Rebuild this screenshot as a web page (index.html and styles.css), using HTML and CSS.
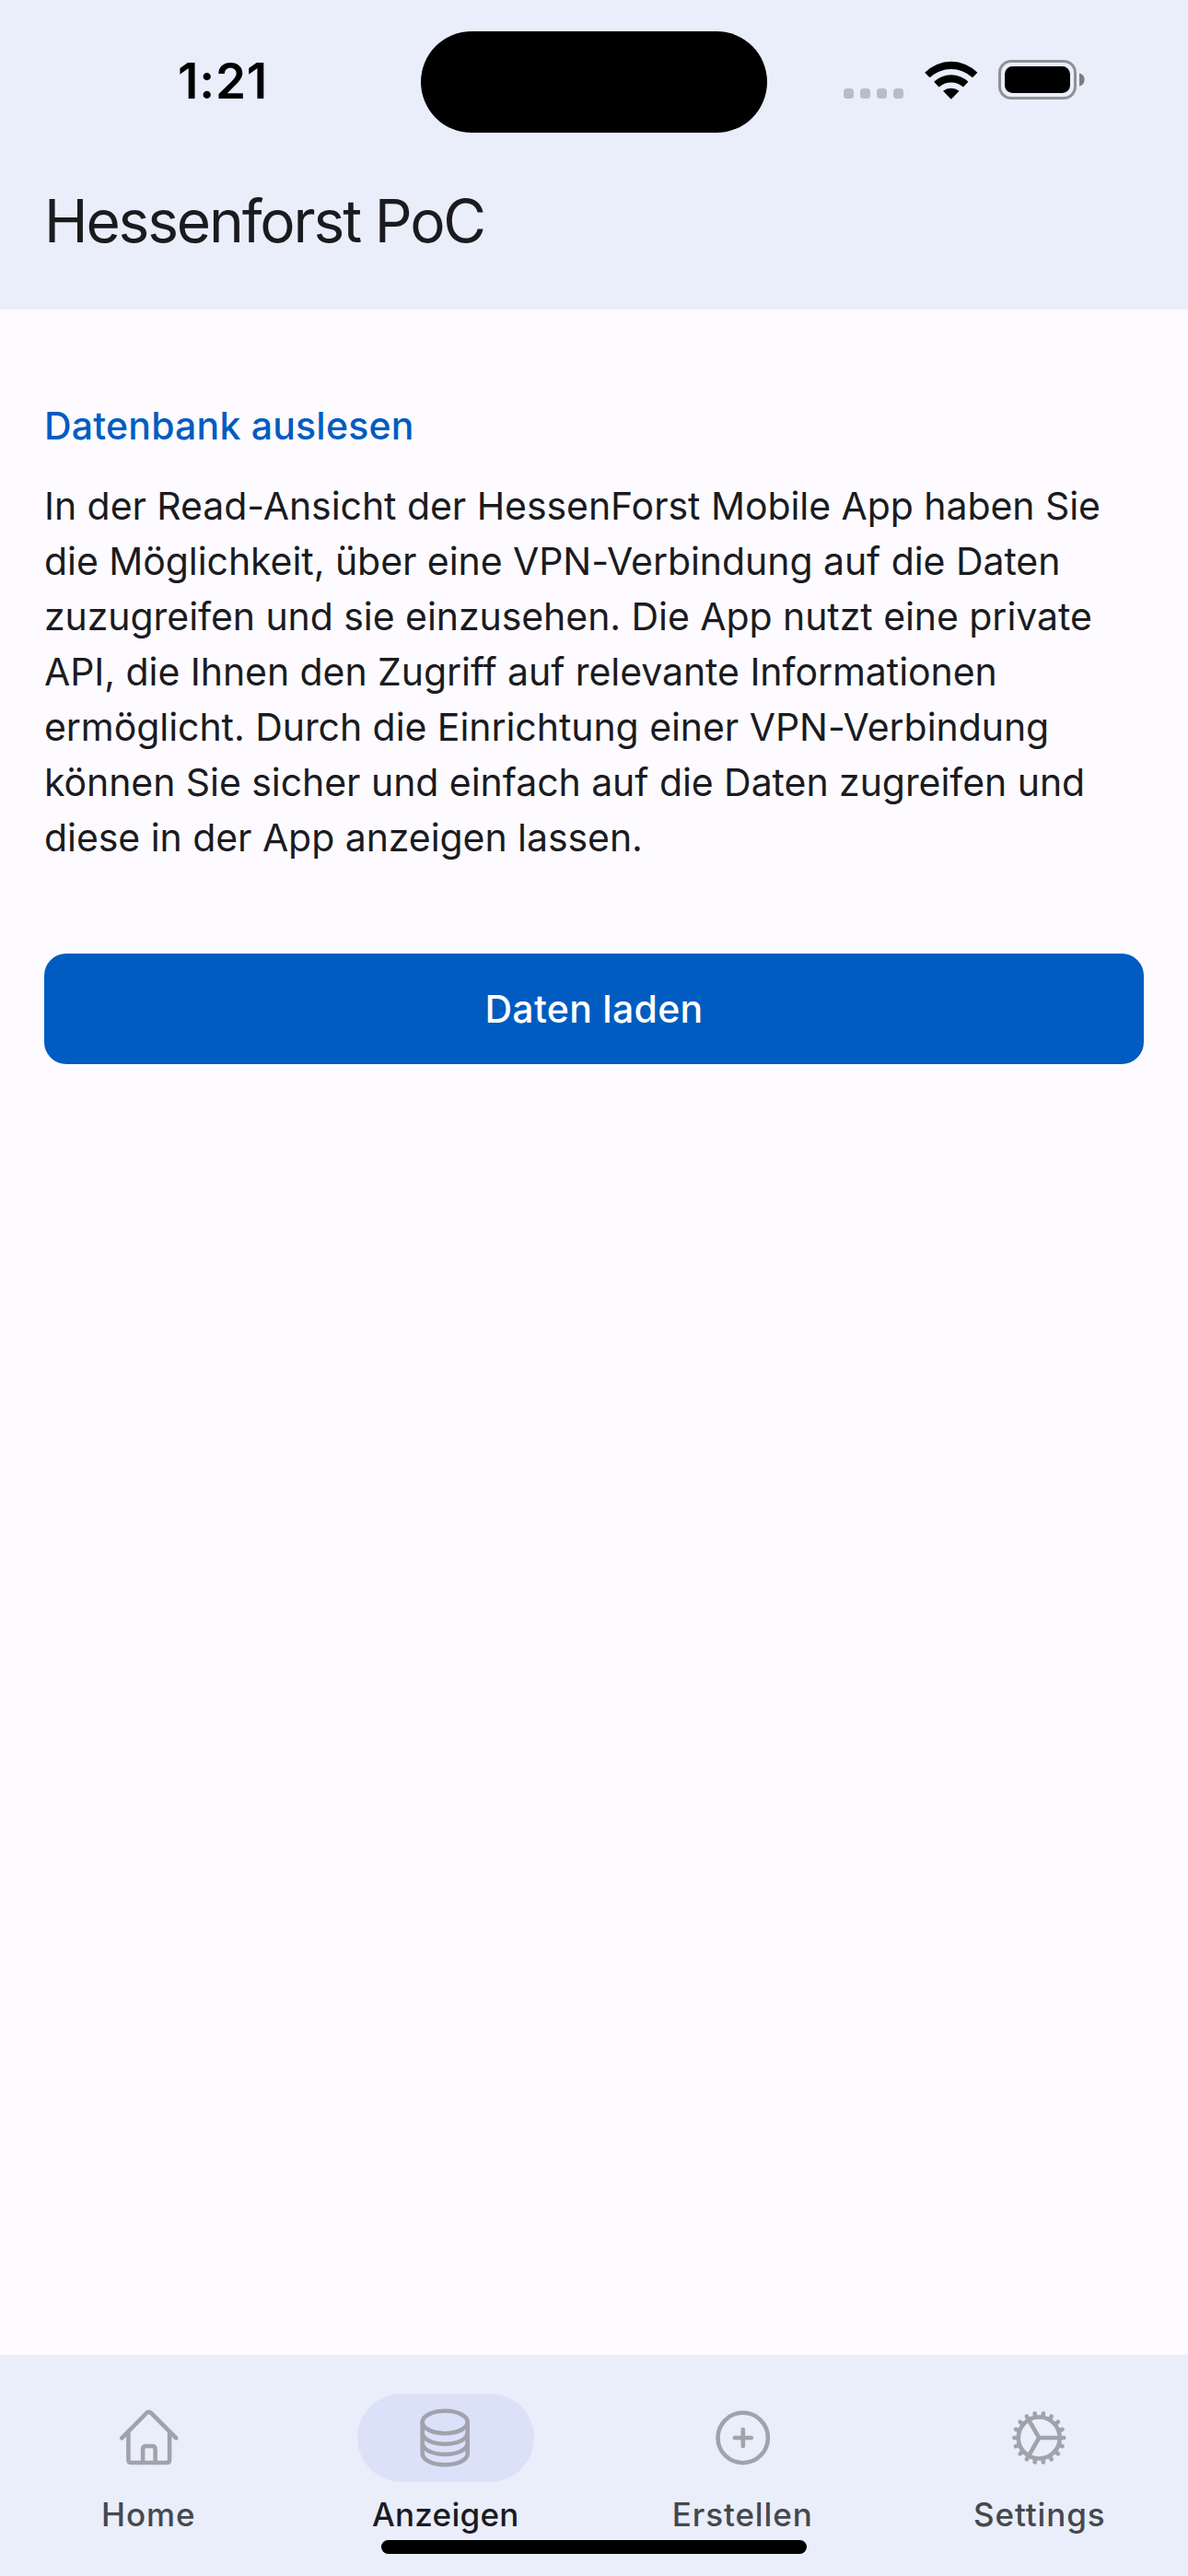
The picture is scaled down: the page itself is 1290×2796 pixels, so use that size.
FILE: index.html
```html
<!DOCTYPE html>
<html lang="de">

<head>
  <meta charset="UTF-8">
  <title>Hessenforst PoC</title>
  <link rel="stylesheet" href="styles.css">
</head>

<body>
  <div class="app">
    <header>
      <div class="statusbar">
        <div class="time">1:21</div>
        <div class="island"></div>
        <div class="status-icons">
          <div class="signal"><i></i><i></i><i></i><i></i></div>
          <svg class="wifi" width="58" height="42" viewBox="0 0 58 42">
            <path d="M0.2 12.8A40 40 0 0 1 57.4 12.8L52 18.2A34 34 0 0 0 5.6 18.2Z"/>
            <path d="M10.2 22.8A27 27 0 0 1 47.4 22.8L42 28.6A19.5 19.5 0 0 0 15.6 28.6Z"/>
            <path d="M20 32.8A14 14 0 0 1 37.6 32.8L28.8 41.8Z"/>
          </svg>
          <svg class="battery" width="94" height="43" viewBox="0 0 94 43">
            <rect x="1.5" y="1.5" width="82" height="40" rx="12.5" fill="none" stroke="#8f9197" stroke-width="3"/>
            <rect x="7" y="7" width="71" height="29" rx="8.5"/>
            <path d="M88 14.5C95.5 16 95.5 27 88 28.5Z" fill="#7b7d83"/>
          </svg>
        </div>
      </div>
      <h1>Hessenforst PoC</h1>
    </header>

    <main>
      <h2>Datenbank auslesen</h2>
      <p>
        In der Read-Ansicht der HessenForst Mobile App haben Sie<br>
        die Möglichkeit, über eine VPN-Verbindung auf die Daten<br>
        zuzugreifen und sie einzusehen. Die App nutzt eine private<br>
        API, die Ihnen den Zugriff auf relevante Informationen<br>
        ermöglicht. Durch die Einrichtung einer VPN-Verbindung<br>
        können Sie sicher und einfach auf die Daten zugreifen und<br>
        diese in der App anzeigen lassen.
      </p>
      <button class="load" type="button">Daten laden</button>
    </main>

    <nav>
      <a class="tab">
        <div class="pill">
          <svg class="icon" viewBox="0 0 72 72">
            <path d="M7.2 36.3L34.2 9Q36.6 6.7 39 9L66.3 36.3"/>
            <path d="M14.4 29.5V60Q14.4 63 17.4 63H56Q59.1 63 59.1 60V29.5"/>
            <path d="M30.1 63V48.5Q30.1 45 33.6 45H40.1Q43.6 45 43.6 48.5V63"/>
          </svg>
        </div>
        <span>Home</span>
      </a>
      <a class="tab active">
        <div class="pill">
          <svg class="icon" viewBox="0 0 72 72">
            <ellipse cx="35.2" cy="19" rx="24.5" ry="12.2"/>
            <path d="M10.7 19V53C10.7 60 21.5 65.2 35.2 65.2S59.7 60 59.7 53V19"/>
            <path d="M10.7 30.5C10.7 37.5 21.5 42.7 35.2 42.7S59.7 37.5 59.7 30.5"/>
            <path d="M10.7 41.8C10.7 48.8 21.5 54 35.2 54S59.7 48.8 59.7 41.8"/>
          </svg>
        </div>
        <span>Anzeigen</span>
      </a>
      <a class="tab">
        <div class="pill">
          <svg class="icon" viewBox="0 0 72 72">
            <circle cx="36.7" cy="36" r="27.2"/>
            <path d="M27.8 36H45.8M36.8 27V45"/>
          </svg>
        </div>
        <span>Erstellen</span>
      </a>
      <a class="tab">
        <div class="pill">
          <svg class="icon" viewBox="0 0 72 72">
            <defs>
              <path id="teeth" d="M8.4 36H12M58.6 36H62.2"/>
            </defs>
            <circle cx="35.3" cy="36" r="22.5"/>
            <use href="#teeth"/>
            <use href="#teeth" transform="rotate(20 35.3 36)"/>
            <use href="#teeth" transform="rotate(40 35.3 36)"/>
            <use href="#teeth" transform="rotate(60 35.3 36)"/>
            <use href="#teeth" transform="rotate(80 35.3 36)"/>
            <use href="#teeth" transform="rotate(100 35.3 36)"/>
            <use href="#teeth" transform="rotate(120 35.3 36)"/>
            <use href="#teeth" transform="rotate(140 35.3 36)"/>
            <use href="#teeth" transform="rotate(160 35.3 36)"/>
            <path d="M57.5 36H35.3L24.2 16.8M35.3 36L24.2 55.2"/>
          </svg>
        </div>
        <span>Settings</span>
      </a>
      <div class="home-indicator"></div>
    </nav>
  </div>
</body>

</html>
```
FILE: styles.css
```css
* {
  box-sizing: border-box;
}

body {
  margin: 0;
  background-color: #fdfbff;
  color: #1b1b1f;
  font-family: Inter, "Liberation Sans", sans-serif;
}

.app {
  width: 1290px;
  height: 2796px;
  display: flex;
  flex-direction: column;
}

header {
  height: 336px;
  background-color: #e9eefa;
}

.statusbar {
  height: 178px;
  display: grid;
  grid-template-columns: 457px 376px 457px;
  align-items: center;
}

.time {
  padding-left: 27px;
  padding-bottom: 2px;
  color: #000;
  font-size: 53px;
  font-weight: 600;
  letter-spacing: 0.8px;
  text-align: center;
}

.island {
  height: 110px;
  border-radius: 55px;
  background-color: #000;
}

.status-icons {
  padding-left: 83px;
  display: flex;
  align-items: center;
}

.signal {
  display: flex;
  gap: 7px;
  margin-right: 23px;
  padding-top: 25px;
}

.signal i {
  width: 11px;
  height: 11px;
  border-radius: 3.5px;
  background-color: #b9bcc3;
}

.wifi {
  margin: 0 22px 5px 0;
}

.battery {
  margin-bottom: 5px;
}

h1 {
  margin: 0;
  padding: 20px 48px 0;
  font-size: 64px;
  font-weight: 400;
  line-height: 84px;
  letter-spacing: -2.15px;
}

main {
  flex: 1;
  padding: 96px 48px 0;
}

h2 {
  margin: 0 0 27px;
  color: #005cc1;
  font-size: 41px;
  font-weight: 500;
  line-height: 60px;
  letter-spacing: 0.2px;
}

p {
  margin: 0 0 96px;
  font-size: 41px;
  line-height: 60px;
  letter-spacing: -0.06px;
  white-space: nowrap;
}

.load {
  display: block;
  width: 100%;
  height: 120px;
  padding: 0;
  border: none;
  border-radius: 24px;
  background-color: #005cc1;
  color: #fff;
  font-family: inherit;
  font-size: 41px;
  font-weight: 500;
  letter-spacing: 0.3px;
}

nav {
  position: relative;
  height: 240px;
  padding-top: 42px;
  display: grid;
  grid-template-columns: repeat(4, 1fr);
  background-color: #e9eefa;
}

.tab {
  display: flex;
  flex-direction: column;
  align-items: center;
  gap: 11px;
  color: #46484d;
  font-size: 35px;
  font-weight: 500;
  line-height: 48px;
  letter-spacing: 0.9px;
}

.active {
  color: #1b1b1f;
  letter-spacing: 0.25px;
}

.pill {
  width: 192px;
  height: 96px;
  display: flex;
  align-items: center;
  justify-content: center;
  border-radius: 48px;
}

.active .pill {
  background-color: #dce1fa;
}

.icon {
  width: 72px;
  height: 72px;
  fill: none;
  stroke: #a0a3ac;
  stroke-width: 4.6;
  stroke-linecap: round;
  stroke-linejoin: round;
}

/* lies over the tab labels */
.home-indicator {
  position: absolute;
  left: 414px;
  bottom: 24px;
  width: 462px;
  height: 15px;
  border-radius: 8px;
  background-color: #000;
}
```
